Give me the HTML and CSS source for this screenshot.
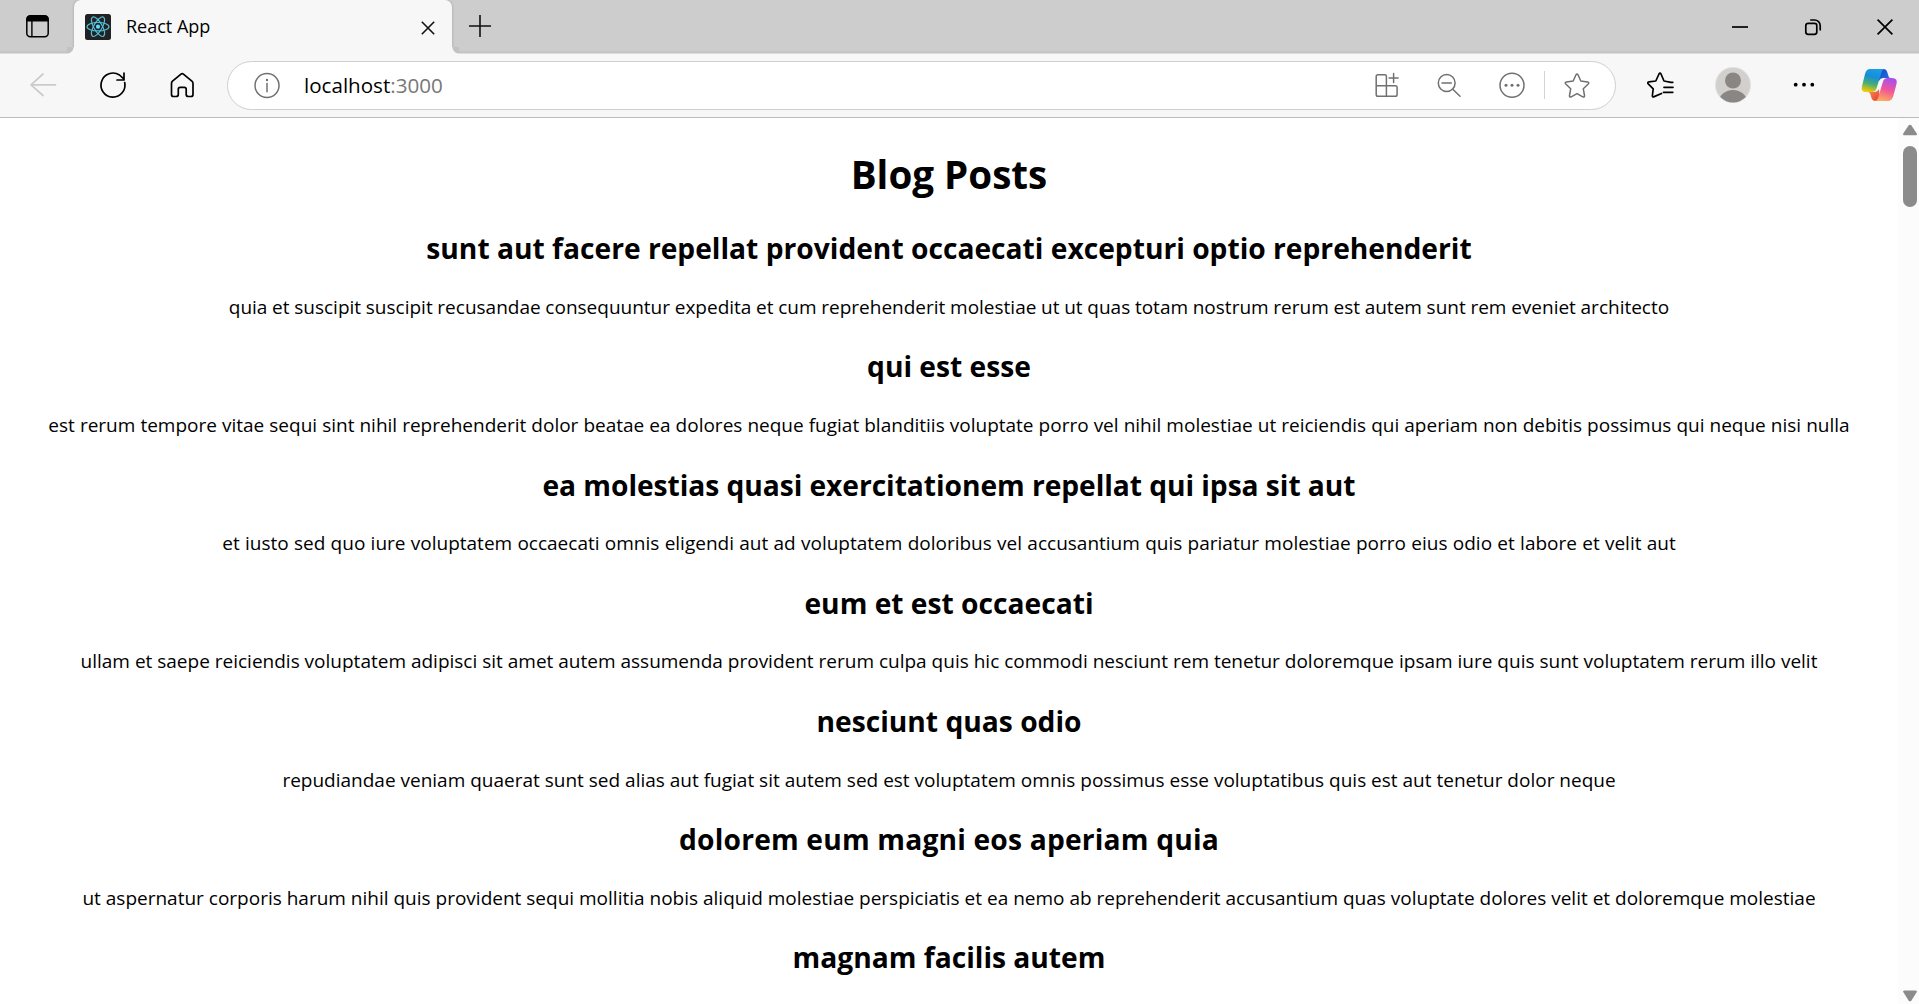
FILE: index.html
```
<!DOCTYPE html>
<html lang="en">
<head>
<meta charset="utf-8">
<title>React App</title>
<link rel="stylesheet" href="styles.css">
</head>
<body>
<header class="tabstrip">
  <svg class="icon tab-actions" viewBox="0 0 36 36"><rect x="8.8" y="8.8" width="21.4" height="21" rx="3.5" fill="none" stroke="#000" stroke-width="1.5"/><path d="M8.5 14.5V12.5Q8.5 8.5 12.5 8.5H26.5Q30.5 8.5 30.5 12.5V14.5Z"/><path d="M13.9 14v15.5" stroke="#000" stroke-width="1.4"/></svg>
  <div class="tab">
    <svg class="favicon" viewBox="0 0 26 26"><rect width="26" height="26" rx="2.5" fill="#222"/><g fill="none" stroke="#53c1de" stroke-width="1.15"><ellipse cx="13" cy="12.7" rx="11" ry="4.2"/><ellipse cx="13" cy="12.7" rx="11" ry="4.2" transform="rotate(60 13 12.7)"/><ellipse cx="13" cy="12.7" rx="11" ry="4.2" transform="rotate(120 13 12.7)"/></g><circle cx="13" cy="12.7" r="2.1" fill="#61dafb"/></svg>
    <span class="tab-title">React App</span>
    <svg class="tab-close" viewBox="0 0 14 14"><path d="M.8.8l12.4 12.4M13.2.8L.8 13.2"/></svg>
  </div>
  <svg class="new-tab" viewBox="0 0 22 22"><path d="M11 0v22M0 11h22"/></svg>
  <div class="window-controls">
    <svg viewBox="0 0 16 16"><path d="M0 8h16"/></svg>
    <svg viewBox="0 0 16 16"><rect x=".8" y="4.3" width="11" height="11" rx="2.3"/><path d="M5.2 1h4.3a5.7 5.7 0 0 1 5.7 5.7v4.8"/></svg>
    <svg viewBox="0 0 16 16"><path d="M.6.6l14.8 14.8M15.4.6L.6 15.4"/></svg>
  </div>
</header>
<nav class="toolbar">
  <svg class="icon back" viewBox="0 0 36 36"><path d="M30.5 17.8H6M18 7L6 17.8 18 28.5"/></svg>
  <svg class="icon reload" viewBox="0 0 36 36"><path d="M29.7 15.5A12 12 0 1 1 24.5 8L29 12.2M29 6v7h-7"/></svg>
  <svg class="icon home" viewBox="0 0 36 36"><path d="M7.5 16.5Q7.5 15.2 8.5 14.2L17 7.2Q18.2 6.2 19.4 7.2L27.9 14.2Q29 15.2 29 16.5V27.5Q29 29.5 27 29.5H24.5Q22.2 29.5 22.2 27.5V22.2Q22.2 20.3 20.3 20.3H16.2Q14.3 20.3 14.3 22.2V27.5Q14.3 29.5 12 29.5H9.5Q7.5 29.5 7.5 27.5Z"/></svg>
  <div class="address">
    <svg class="icon info" viewBox="0 0 36 36"><circle cx="18" cy="18.5" r="12"/><path d="M18 16.5v8.3"/><circle class="dot" cx="18" cy="13" r="1.2"/></svg>
    <span class="url">localhost<span class="port">:3000</span></span>
    <svg class="icon apps" viewBox="0 0 36 36"><path d="M17.4 29.5V9.3Q17.4 7.8 15.9 7.8H9Q7.2 7.8 7.2 9.6V27.5Q7.2 29.3 9 29.3H26.3Q28.1 29.3 28.1 27.5V20.2Q28.1 18.7 26.3 18.7H7.2M24.6 6.5v9M20.1 11h9"/></svg>
    <svg class="icon zoom-out" viewBox="0 0 36 36"><circle cx="15.7" cy="16" r="8.4"/><path d="M21.8 22.2l7.2 7M11 16h9.3"/></svg>
    <svg class="icon more-info" viewBox="0 0 36 36"><circle cx="18" cy="18.3" r="12"/><g class="dot"><circle cx="12" cy="18.3" r="1.5"/><circle cx="18" cy="18.3" r="1.5"/><circle cx="24" cy="18.3" r="1.5"/></g></svg>
    <i class="divider"></i>
    <svg class="icon star" viewBox="0 0 36 36"><path d="M17 7.8Q18 6 19 7.8L21.8 14 28.5 15Q30.7 15.4 29.2 17L24.3 21.8 25.5 28.5Q25.7 30.6 23.8 29.8L18 26.6 12.2 29.8Q10.3 30.6 10.5 28.5L11.7 21.8 6.8 17Q5.3 15.4 7.5 15L14.2 14Z"/></svg>
  </div>
  <svg class="icon favorites" viewBox="0 0 36 36"><path d="M19.5 26.5L12.2 29.6Q10.2 30.4 10.4 28.5L11.2 21.8 6.2 16.8Q5 15.2 7 14.8L13.8 14 17 7Q18 5.3 19 7L22 14 29 15.3H30.8M22 20.3h9M21.5 25.3h9.3"/></svg>
  <svg class="icon avatar" viewBox="0 0 36 36"><clipPath id="face"><circle cx="18" cy="18" r="17.5"/></clipPath><circle cx="18" cy="18" r="18" fill="#e0dfdc"/><circle cx="18" cy="18" r="17" fill="#d2d0cd"/><g clip-path="url(#face)" fill="#8a8683"><circle cx="18" cy="13.5" r="8"/><ellipse cx="18" cy="36" rx="14.5" ry="13"/></g></svg>
  <svg class="icon menu" viewBox="0 0 36 36"><circle cx="9.7" cy="17.7" r="1.9"/><circle cx="18" cy="17.7" r="1.9"/><circle cx="26.3" cy="17.7" r="1.9"/></svg>
  <svg class="icon copilot" viewBox="0 0 36 36">
    <defs>
      <linearGradient id="cool" x1=".6" y1="0" x2=".35" y2="1"><stop offset="0" stop-color="#1b9bea"/><stop offset=".35" stop-color="#168fd5"/><stop offset=".65" stop-color="#46ab78"/><stop offset="1" stop-color="#f2cc00"/></linearGradient>
      <linearGradient id="warm" x1=".65" y1="0" x2=".35" y2="1"><stop offset="0" stop-color="#a84fee"/><stop offset=".5" stop-color="#f0569a"/><stop offset="1" stop-color="#ffad5a"/></linearGradient>
      <linearGradient id="fold" x1="0" y1="0" x2="1" y2="1"><stop offset="0" stop-color="#1749c6"/><stop offset="1" stop-color="#2572ea"/></linearGradient>
      <linearGradient id="tail" x1="0" y1="0" x2="1" y2="1"><stop offset="0" stop-color="#ff9551"/><stop offset="1" stop-color="#e23b36"/></linearGradient>
    </defs>
    <path fill="url(#fold)" d="M17 2H22.5Q25.3 2 26.2 5L27.6 9.5Q28 11 30 11H22Q19.3 11 18 14Z"/>
    <path fill="url(#tail)" d="M19 34H14.5Q11.5 34 10.5 31L9.2 26.7Q8.6 25 6.5 25H13Q16.5 25 18 22Z"/>
    <path fill="url(#cool)" d="M9 2H24Q21.5 2 20.6 5L15.5 21.5Q14.4 25 11 25H5Q-.6 25 1 19L4 7Q5.3 2 9 2Z"/>
    <path fill="url(#warm)" d="M27 34H13.5Q16 34 17 31L22 14.5Q23 11 26.5 11H31Q37 11 35.5 17L32.3 29Q31 34 27 34Z"/>
  </svg>
</nav>
<div class="viewport">
  <main class="page">
    <h1>Blog Posts</h1>
    <article><h2>sunt aut facere repellat provident occaecati excepturi optio reprehenderit</h2><p>quia et suscipit suscipit recusandae consequuntur expedita et cum reprehenderit molestiae ut ut quas totam nostrum rerum est autem sunt rem eveniet architecto</p></article>
    <article><h2>qui est esse</h2><p>est rerum tempore vitae sequi sint nihil reprehenderit dolor beatae ea dolores neque fugiat blanditiis voluptate porro vel nihil molestiae ut reiciendis qui aperiam non debitis possimus qui neque nisi nulla</p></article>
    <article><h2>ea molestias quasi exercitationem repellat qui ipsa sit aut</h2><p>et iusto sed quo iure voluptatem occaecati omnis eligendi aut ad voluptatem doloribus vel accusantium quis pariatur molestiae porro eius odio et labore et velit aut</p></article>
    <article><h2>eum et est occaecati</h2><p>ullam et saepe reiciendis voluptatem adipisci sit amet autem assumenda provident rerum culpa quis hic commodi nesciunt rem tenetur doloremque ipsam iure quis sunt voluptatem rerum illo velit</p></article>
    <article><h2>nesciunt quas odio</h2><p>repudiandae veniam quaerat sunt sed alias aut fugiat sit autem sed est voluptatem omnis possimus esse voluptatibus quis est aut tenetur dolor neque</p></article>
    <article><h2>dolorem eum magni eos aperiam quia</h2><p>ut aspernatur corporis harum nihil quis provident sequi mollitia nobis aliquid molestiae perspiciatis et ea nemo ab reprehenderit accusantium quas voluptate dolores velit et doloremque molestiae</p></article>
    <article><h2>magnam facilis autem</h2></article>
  </main>
  <aside class="scrollbar">
    <svg class="arrow" viewBox="0 0 14 12"><path d="M5.7 1.3Q7 0 8.3 1.3L13.6 9.2Q14.6 11.3 12.5 11.3H1.5Q-.6 11.3.4 9.2Z"/></svg>
    <div class="thumb"></div>
    <svg class="arrow down" viewBox="0 0 14 12"><path d="M5.7 10.7Q7 12 8.3 10.7L13.6 2.3Q14.6.5 12.5.5H1.5Q-.6.5.4 2.3Z"/></svg>
  </aside>
</div>
</body>
</html>
```
FILE: styles.css
```
* { box-sizing: border-box; }
body {
  margin: 0;
  height: 1004px;
  overflow: hidden;
  display: flex;
  flex-direction: column;
  font-family: "Open Sans", "Noto Sans", sans-serif;
  color: #000;
  background: #fff;
}
svg { display: block; flex: none; overflow: visible; }
.icon { width: 36px; height: 36px; }

/* Tab strip */
.tabstrip {
  display: flex;
  align-items: flex-start;
  flex: none;
  height: 54px;
  background: linear-gradient(#cdcdcd 50px, #c1c1c1 53px, #dedede 53px);
}
.tab-actions { margin: 7px 0 0 18px; }
.tab {
  position: relative;
  display: flex;
  align-items: center;
  width: 378px;
  height: 54px;
  margin-left: 20px;
  padding: 0 17.5px 0 11px;
  border-radius: 7px 7px 0 0;
  background: #f7f7f7;
  box-shadow: 0 0 3px rgba(0, 0, 0, .22);
  clip-path: inset(0 -7px 0 -7px);
}
.tab::before, .tab::after {
  content: "";
  position: absolute;
  bottom: 0;
  width: 7px;
  height: 7px;
}
.tab::before { left: -7px; background: radial-gradient(circle at 0 0, #c2c2c2 6px, #f7f7f7 7px); }
.tab::after { right: -7px; background: radial-gradient(circle at 100% 0, #c2c2c2 6px, #f7f7f7 7px); }
.favicon { width: 26px; height: 26px; }
.tab-title { margin: -2px auto 0 15px; font-size: 18px; line-height: 24px; }
.tab-close { width: 14px; height: 14px; stroke: #111; stroke-width: 1.6; margin-top: 1px; }
.new-tab { width: 22px; height: 22px; margin: 15px 0 0 16.5px; stroke: #111; stroke-width: 1.6; }
.window-controls { display: flex; gap: 56.5px; margin: 19px 26px 0 auto; }
.window-controls svg { width: 16px; height: 16px; fill: none; stroke: #000; stroke-width: 1.7; }

/* Toolbar */
.toolbar {
  display: flex;
  align-items: center;
  flex: none;
  height: 64px;
  padding-bottom: 1px;
  background: #f7f7f7;
  border-bottom: 1px solid #bcbcbc;
}
.toolbar .icon { fill: none; stroke: #000; stroke-width: 1.7; stroke-linecap: round; stroke-linejoin: round; }
.toolbar .back { margin: 0 0 0 25px; stroke: #cbcbcb; }
.reload { margin-left: 34px; }
.home { margin-left: 32.5px; }
.address {
  display: flex;
  align-items: center;
  width: 1389px;
  height: 49px;
  margin-left: 27.5px;
  border: 1.5px solid #cfcfcf;
  border-radius: 25px;
  background: #fff;
}
.toolbar .address .icon { stroke: #707070; stroke-width: 1.5; }
.toolbar .address .dot { fill: #707070; stroke: none; }
.toolbar .info { margin-left: 21px; }
.url { margin: -1px auto 0 19px; font-size: 20.6px; line-height: 28px; }
.port { color: #777; }
.zoom-out { margin-left: 26.5px; }
.more-info { margin-left: 27px; }
.divider { width: 1px; height: 28px; margin-left: 14px; background: #d4d4d4; }
.star { margin: 0 20.5px 0 13.5px; }
.favorites { margin-left: 26px; }
.avatar { margin-left: 36.5px; }
.toolbar .avatar, .toolbar .menu, .toolbar .copilot { stroke: none; }
.toolbar .menu { margin-left: 35.5px; fill: #000; }
.copilot { margin-left: 38.5px; }

/* Page */
.viewport { display: flex; flex: 1; min-height: 0; }
.page { flex: 1; min-width: 0; text-align: center; white-space: nowrap; }
h1 { margin: 30px 0 27.4px; font-size: 38.6px; line-height: 53px; font-weight: 700; }
h2 { margin: 0 0 25.8px; font-size: 28.2px; line-height: 40px; font-weight: 700; }
p { margin: 0; font-size: 19px; line-height: 27px; }
article { height: 118.1px; }
article:last-of-type { height: 40px; }
article:nth-of-type(1) p { word-spacing: -.24px; }
article:nth-of-type(2) p { word-spacing: .11px; }
article:nth-of-type(3) p { word-spacing: .36px; }
article:nth-of-type(3) h2 { letter-spacing: -.05px; }
article:nth-of-type(6) h2 { letter-spacing: .19px; }
article:last-of-type h2 { margin: 0; }

/* Scrollbar */
.scrollbar {
  display: flex;
  flex-direction: column;
  align-items: center;
  width: 21px;
  padding: 6px 0 2px 3px;
  background: #fcfcfc;
}
.arrow { width: 14px; height: 12px; fill: #8b8b8b; }
.thumb { width: 14px; height: 61px; margin-top: 10px; border-radius: 7px; background: #8b8b8b; }
.down { margin-top: auto; }
```
